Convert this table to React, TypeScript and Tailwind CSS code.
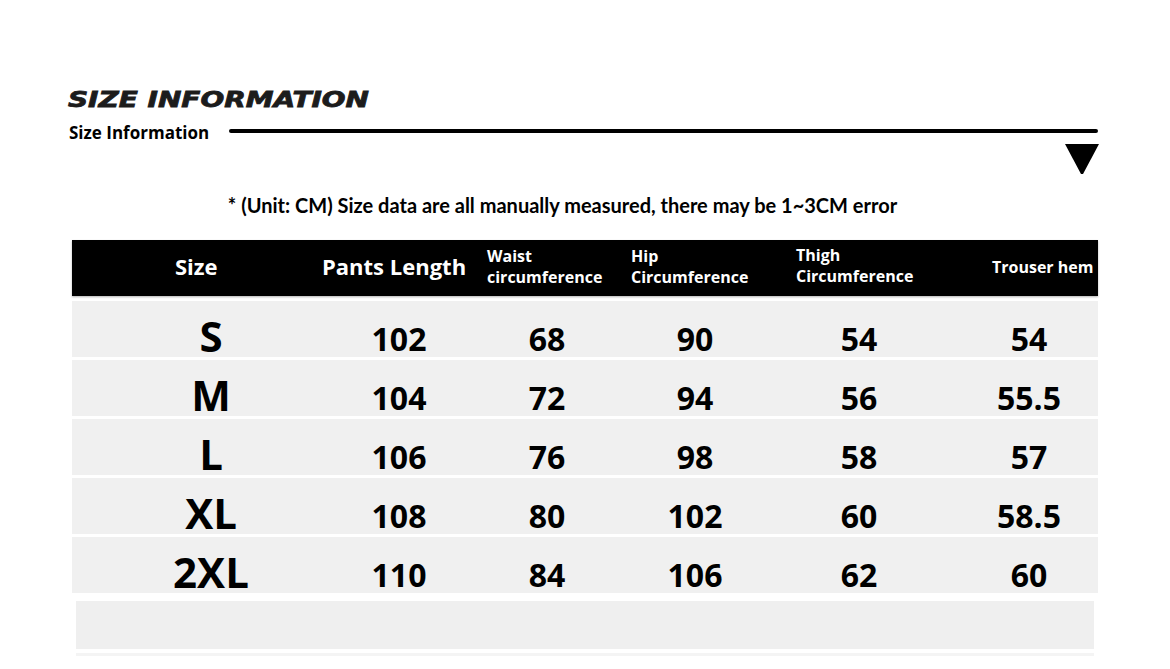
const rows = [
  { size: 'S', vals: ['102', '68', '90', '54', '54'] },
  { size: 'M', vals: ['104', '72', '94', '56', '55.5'] },
  { size: 'L', vals: ['106', '76', '98', '58', '57'] },
  { size: 'XL', vals: ['108', '80', '102', '60', '58.5'] },
  { size: '2XL', vals: ['110', '84', '106', '62', '60'] },
];

function Triangle() {
  return (
    <svg width="36" height="32" viewBox="0 0 36 32">
      <path d="M1 1 L35 1 L19 31 L17 31 Z" fill="#000" />
    </svg>
  );
}

export default function App() {
  return (
    <div className="w-[1170px] h-[669px] bg-white overflow-hidden font-['Open_Sans',sans-serif] text-black">
      {/* Titulo */}
      <div className="pt-[88px] pl-[68px]">
        <div className="origin-left scale-x-[1.33] font-['DejaVu_Sans',sans-serif] font-bold italic text-[21px] leading-[24px] text-[#1c1c1c] [-webkit-text-stroke:0.8px_#1c1c1c]">
          SIZE INFORMATION
        </div>
      </div>

      <div className="mt-[11px] pl-[69px] pr-[72px] flex items-center">
        <span className="text-[17px] leading-[20px] font-bold">Size Information</span>
        <div className="ml-[20px] flex-1 h-[4px] bg-black rounded-full -mt-[4px]" />
      </div>

      <div className="flex justify-end pr-[70px]">
        <Triangle />
      </div>

      {/* Nota */}
      <p className="mt-[19px] text-center pr-[45px] font-['Lato',sans-serif] font-bold text-[20px] leading-[22px]">
        * (Unit: CM) Size data are all manually measured, there may be 1~3CM error
      </p>

      {/* Tabla */}
      <div className="mt-[24px] ml-[72px] w-[1026px]">
        <div className="h-[56px] bg-black text-white font-bold grid grid-cols-[147px_165px_144px_165px_196px_1fr] items-center pl-[103px] shadow-[0_1px_2px_rgba(0,0,0,0.3)]">
          <span className="text-[22px] -mt-[4px]">Size</span>
          <span className="text-[22px] -mt-[4px]">Pants Length</span>
          <div className="text-[16px] leading-[21px] -mt-[2px]">
            <p>Waist</p>
            <p>circumference</p>
          </div>
          <div className="text-[16px] leading-[21px] -mt-[2px]">
            <p>Hip</p>
            <p>Circumference</p>
          </div>
          <div className="text-[16px] leading-[21px] -mt-[4px]">
            <p>Thigh</p>
            <p>Circumference</p>
          </div>
          <span className="text-[16px] -mt-[2px]">Trouser hem</span>
        </div>

        <div className="mt-[5px] flex flex-col gap-[3px]">
          {rows.map((r) => (
            <div
              key={r.size}
              className="h-[56px] bg-[#f0f0f0] grid grid-cols-[278px_98px_198px_98px_230px_110px] items-center pt-[14px] font-bold"
            >
              <span className="text-center text-[42px] leading-none pb-[6px]">{r.size}</span>
              {r.vals.map((v, i) => (
                <span key={i} className="text-center text-[32px] leading-none">
                  {v}
                </span>
              ))}
            </div>
          ))}
        </div>

        {/* Fila vacía */}
        <div className="mt-[8px] mx-[4px] h-[52px] bg-[#efefef] border-b-[4px] border-white shadow-[0_3px_0_#f4f4f4]" />
      </div>
    </div>
  );
}
